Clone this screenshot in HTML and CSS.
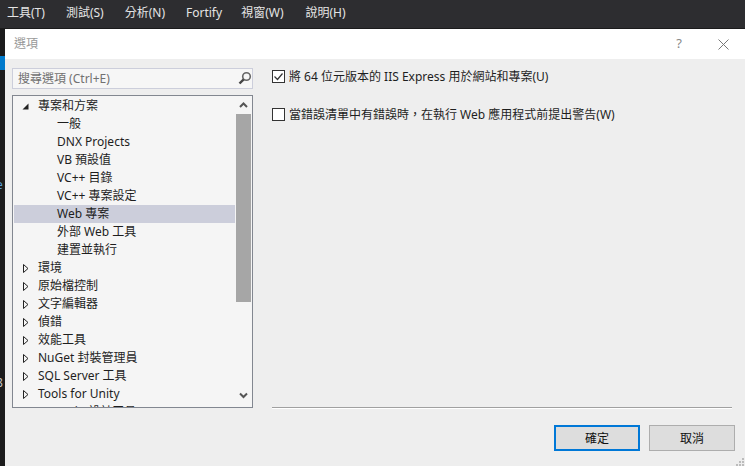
FILE: index.html
```html
<!DOCTYPE html>
<html lang="zh-Hant">
<head>
<meta charset="utf-8">
<title>選項</title>
<link rel="stylesheet" href="styles.css">
</head>
<body>
<div class="menubar">
  <span class="menu">工具(T)</span>
  <span class="menu">測試(S)</span>
  <span class="menu">分析(N)</span>
  <span class="menu">Fortify</span>
  <span class="menu">視窗(W)</span>
  <span class="menu">說明(H)</span>
</div>
<div class="desk">
  <div class="strip">
    <div class="strip-blue"></div>
    <span class="frag frag-e">e</span>
    <span class="frag frag-8">8</span>
  </div>
  <div class="dialog">
    <div class="titlebar">
      <span class="title">選項</span>
      <span class="help">?</span>
      <svg class="close" width="11" height="11" viewBox="0 0 11 11"><path d="M.5.5l10 10M10.5.5l-10 10" stroke="#777" fill="none"/></svg>
    </div>
    <div class="content">
      <div class="left">
        <div class="search">
          <span class="search-text">搜尋選項 (Ctrl+E)</span>
          <svg width="14" height="14" viewBox="0 0 14 14"><circle cx="8.5" cy="5.5" r="3.8" fill="none" stroke="#666" stroke-width="1.6"/><path d="M5.7 8.3L1.5 12.5" stroke="#444" stroke-width="2.4"/></svg>
        </div>
        <div class="tree">
          <div class="rows">
            <div class="row"><svg class="tw" width="9" height="9" viewBox="0 0 9 9"><path d="M7.5 1.5v6h-6z" fill="#222"/></svg><span>專案和方案</span></div>
            <div class="row child">一般</div>
            <div class="row child">DNX Projects</div>
            <div class="row child">VB 預設值</div>
            <div class="row child">VC++ 目錄</div>
            <div class="row child">VC++ 專案設定</div>
            <div class="row child selected">Web 專案</div>
            <div class="row child">外部 Web 工具</div>
            <div class="row child">建置並執行</div>
            <div class="row"><svg class="tw" width="9" height="9" viewBox="0 0 9 9"><path d="M2.5.5l4.5 4-4.5 4z" fill="none" stroke="#222"/></svg><span>環境</span></div>
            <div class="row"><svg class="tw" width="9" height="9" viewBox="0 0 9 9"><path d="M2.5.5l4.5 4-4.5 4z" fill="none" stroke="#222"/></svg><span>原始檔控制</span></div>
            <div class="row"><svg class="tw" width="9" height="9" viewBox="0 0 9 9"><path d="M2.5.5l4.5 4-4.5 4z" fill="none" stroke="#222"/></svg><span>文字編輯器</span></div>
            <div class="row"><svg class="tw" width="9" height="9" viewBox="0 0 9 9"><path d="M2.5.5l4.5 4-4.5 4z" fill="none" stroke="#222"/></svg><span>偵錯</span></div>
            <div class="row"><svg class="tw" width="9" height="9" viewBox="0 0 9 9"><path d="M2.5.5l4.5 4-4.5 4z" fill="none" stroke="#222"/></svg><span>效能工具</span></div>
            <div class="row"><svg class="tw" width="9" height="9" viewBox="0 0 9 9"><path d="M2.5.5l4.5 4-4.5 4z" fill="none" stroke="#222"/></svg><span>NuGet 封裝管理員</span></div>
            <div class="row"><svg class="tw" width="9" height="9" viewBox="0 0 9 9"><path d="M2.5.5l4.5 4-4.5 4z" fill="none" stroke="#222"/></svg><span>SQL Server 工具</span></div>
            <div class="row"><svg class="tw" width="9" height="9" viewBox="0 0 9 9"><path d="M2.5.5l4.5 4-4.5 4z" fill="none" stroke="#222"/></svg><span>Tools for Unity</span></div>
            <div class="row"><span class="row-gap"></span><span>Xamarin 設計工具</span></div>
          </div>
          <div class="scrollbar">
            <svg class="arrow" width="15" height="18" viewBox="0 0 15 18"><path d="M4 11l3.5-3.5 3.5 3.5" fill="none" stroke="#555" stroke-width="2"/></svg>
            <div class="thumb"></div>
            <div class="track"></div>
            <svg class="arrow" width="15" height="17" viewBox="0 0 15 17"><path d="M4 6.5l3.5 3.5 3.5-3.5" fill="none" stroke="#555" stroke-width="2"/></svg>
          </div>
        </div>
      </div>
      <div class="right">
        <div class="options">
          <label class="option">
            <svg class="check" width="13" height="13" viewBox="0 0 13 13"><rect x=".5" y=".5" width="12" height="12" fill="#fff" stroke="#333"/><path d="M2.5 6.5l3 3 5-6" fill="none" stroke="#333" stroke-width="1.2"/></svg>
            <span>將 64 位元版本的 IIS Express 用於網站和專案(U)</span>
          </label>
          <label class="option">
            <svg class="check" width="13" height="13" viewBox="0 0 13 13"><rect x=".5" y=".5" width="12" height="12" fill="#fff" stroke="#333"/></svg>
            <span>當錯誤清單中有錯誤時，在執行 Web 應用程式前提出警告(W)</span>
          </label>
        </div>
        <div class="rule"></div>
      </div>
    </div>
    <div class="footer">
      <button class="btn primary">確定</button>
      <button class="btn">取消</button>
    </div>
    <svg class="grip" width="10" height="10" viewBox="0 0 10 10"><path d="M7 0h2v2H7zM4 3h2v2H4zM7 3h2v2H7zM1 6h2v2H1zM4 6h2v2H4zM7 6h2v2H7z" fill="#bcbcbc"/></svg>
  </div>
</div>
</body>
</html>
```
FILE: styles.css
```css
* { box-sizing: border-box; }
html, body { margin: 0; padding: 0; }
body {
  width: 745px;
  height: 466px;
  overflow: hidden;
  background: #1b1b1c;
  font-family: "Noto Sans", "Noto Sans CJK TC", sans-serif;
  font-size: 12px;
  color: #1e1e1e;
  display: flex;
  flex-direction: column;
}
.menubar {
  height: 29px;
  flex: none;
  display: flex;
  align-items: flex-start;
  gap: 21px;
  padding: 4px 0 0 7px;
  background: linear-gradient(#2d2d30 28px, #1b1b1c 28px);
  color: #e4e4e4;
  line-height: 18px;
}
.menu:nth-child(5) { margin-left: -2px; }
.menu:nth-child(6) { margin-left: 1px; }
.desk { flex: 1; display: flex; min-height: 0; }
.strip { width: 5px; flex: none; padding-top: 27px; position: relative; overflow: hidden; }
.strip-blue { height: 14px; background: #007acc; }
.frag { position: absolute; left: -4px; font-size: 12px; line-height: 14px; }
.frag-e { top: 149px; color: #569cd6; }
.frag-8 { top: 347px; color: #c8c8c8; }
.dialog {
  flex: 1;
  display: flex;
  flex-direction: column;
  background: #eeeeee;
  min-width: 0;
  position: relative;
}
.titlebar {
  height: 30px;
  flex: none;
  background: #fff;
  display: flex;
  align-items: center;
  padding: 0 16px 2px 9px;
}
.title { color: #999; flex: 1; }
.help { color: #888; margin-right: 36px; font-size: 13px; }
.close { margin-top: 2px; }
.content { flex: 1; display: flex; min-height: 0; padding: 9px 0 0 7px; }
.left { width: 241px; flex: none; display: flex; flex-direction: column; }
.search {
  height: 21px;
  flex: none;
  background: #f6f6f6;
  border: 1px solid #cccedb;
  display: flex;
  align-items: center;
  justify-content: space-between;
  padding: 0 0 2px 5px;
  color: #717171;
}
.tree {
  margin-top: 6px;
  height: 313px;
  flex: none;
  display: flex;
  border: 1px solid #828790;
  background: #f5f5f5;
  padding: 0 1px 0 1px;
  overflow: hidden;
}
.rows { flex: 1; min-width: 0; overflow: hidden; padding-top: 1px; }
.row {
  height: 18px;
  line-height: 18px;
  display: flex;
  align-items: center;
  white-space: nowrap;
}
.row .tw { margin-left: 7px; margin-right: 8px; flex: none; }
.row-gap { width: 24px; flex: none; }
.child { padding-left: 43px; }
.selected { background: #cccedb; }
.scrollbar {
  width: 16px;
  flex: none;
  display: flex;
  flex-direction: column;
  padding-left: 1px;
  background: #f5f5f5;
}
.arrow { display: block; flex: none; }
.scrollbar .arrow:last-child { margin-bottom: 3px; }
.thumb { height: 188px; flex: none; background: #a6a6a6; width: 15px; }
.track { flex: 1; }
.right {
  flex: 1;
  display: flex;
  flex-direction: column;
  padding: 0 13px 0 19px;
  min-width: 0;
  margin-top: -1px;
}
.options { flex: none; height: 332px; display: flex; flex-direction: column; gap: 20px; }
.option {
  display: flex;
  align-items: center;
  gap: 3px;
  height: 18px;
  white-space: nowrap;
  color: #1e1e1e;
}
.check { flex: none; margin-right: 1px; }
.rule {
  margin-top: 8px;
  height: 2px;
  border-top: 1px solid #a0a0a0;
  border-bottom: 1px solid #fff;
}
.footer {
  flex: none;
  height: 58px;
  display: flex;
  justify-content: flex-end;
  gap: 9px;
  padding: 17px 10px 0 0;
}
.btn {
  width: 86px;
  height: 26px;
  background: #dddddd;
  border: 1px solid #adadad;
  font: inherit;
  color: #111;
  padding: 0;
}
.primary { border: 2px solid #0078d7; }
.grip { position: absolute; right: 0; bottom: -2px; }
```
